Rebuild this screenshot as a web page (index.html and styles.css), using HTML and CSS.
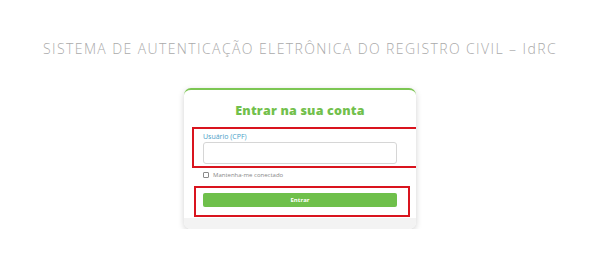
FILE: index.html
```html
<!DOCTYPE html>
<html lang="pt-BR">
<head>
    <meta charset="UTF-8">
    <meta name="viewport" content="width=device-width, initial-scale=1.0">
    <title>IdRC - Entrar</title>
    <link rel="stylesheet" href="styles.css">
</head>
<body>

    <h1 class="system-title">SISTEMA DE AUTENTICAÇÃO ELETRÔNICA DO REGISTRO CIVIL – IdRC</h1>

    <div class="login-card">
        <h2 class="login-title">Entrar na sua conta</h2>
        <form class="login-form">
            <div class="field highlight">
                <label for="cpf">Usuário (CPF)</label>
                <input type="text" id="cpf">
            </div>
            <label class="remember">
                <input type="checkbox"> Mantenha-me conectado
            </label>
            <div class="actions highlight">
                <button type="button">Entrar</button>
            </div>
        </form>
        <div class="card-footer"></div>
    </div>

</body>
</html>
```

FILE: styles.css
```css
body {
    margin: 0;
    background-color: #fff;
    font-family: 'Open Sans', 'Liberation Sans', sans-serif;
}
.system-title {
    margin: 41px 0 0;
    text-align: center;
    font-size: 14px;
    line-height: 16px;
    font-weight: 300;
    letter-spacing: 1.4px;
    color: #aaa;
}
.login-card {
    width: 232px;
    margin: 31px auto 0;
    background-color: #fff;
    border-top: 2px solid #7cc653;
    border-radius: 7px;
    box-shadow: 0 2px 6px rgba(0, 0, 0, 0.18);
    overflow: hidden;
}
.login-title {
    margin: 13px 0 8px;
    text-align: center;
    font-size: 12.5px;
    line-height: 16px;
    font-weight: 800;
    letter-spacing: 0.2px;
    color: #72c04c;
}
.highlight {
    border: 2px solid #d9141e;
}
.field {
    margin: 0 -5px 0 8px;
    padding: 3px 22px 2px 9px;
}
.field label {
    display: block;
    font-size: 7px;
    line-height: 9px;
    color: #4aa0c8;
    margin-bottom: 1px;
}
.field input {
    display: block;
    box-sizing: border-box;
    width: 100%;
    height: 22px;
    border: 1px solid #d6d6d6;
    border-radius: 3px;
}
.remember {
    display: flex;
    align-items: center;
    gap: 4px;
    height: 9px;
    margin: 2px 0 0 19px;
    font-size: 6px;
    color: #888;
}
.remember input {
    appearance: none;
    width: 6px;
    height: 6px;
    margin: 0;
    border: 1px solid #8a8a8a;
    border-radius: 1px;
    background-color: #fff;
}
.actions {
    margin: 7px 6px 0 10px;
    padding: 5px 11px 8px 7px;
}
.actions button {
    display: block;
    width: 100%;
    height: 14px;
    padding: 0;
    border: none;
    border-radius: 2px;
    background-color: #6fc04b;
    color: #fff;
    font-family: inherit;
    font-size: 6px;
    font-weight: bold;
    cursor: pointer;
}
.card-footer {
    height: 11px;
    margin-top: 1px;
    background-color: #f3f3f3;
}
```
